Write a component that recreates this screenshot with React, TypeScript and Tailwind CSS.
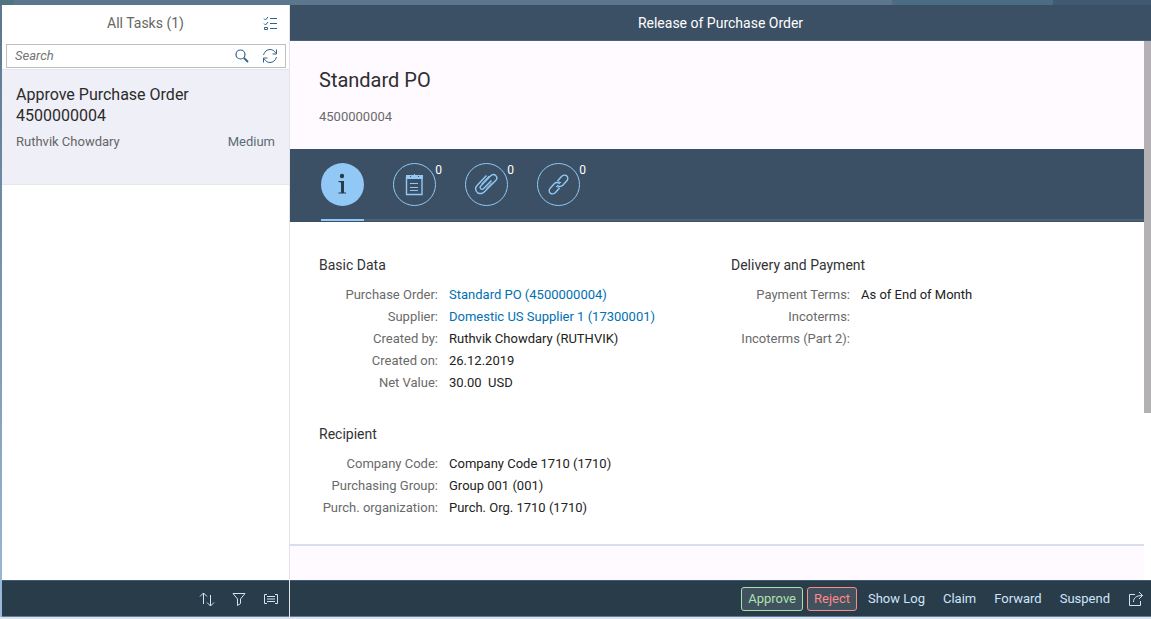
import type { ReactNode } from 'react';

type Row = { label: string; value?: string; link?: boolean };

const basicData: Row[] = [
  { label: 'Purchase Order:', value: 'Standard PO (4500000004)', link: true },
  { label: 'Supplier:', value: 'Domestic US Supplier 1 (17300001)', link: true },
  { label: 'Created by:', value: 'Ruthvik Chowdary (RUTHVIK)' },
  { label: 'Created on:', value: '26.12.2019' },
  { label: 'Net Value:', value: '30.00\u00a0 USD' },
];

const recipient: Row[] = [
  { label: 'Company Code:', value: 'Company Code 1710 (1710)' },
  { label: 'Purchasing Group:', value: 'Group 001 (001)' },
  { label: 'Purch. organization:', value: 'Purch. Org. 1710 (1710)' },
];

const delivery: Row[] = [
  { label: 'Payment Terms:', value: 'As of End of Month' },
  { label: 'Incoterms:' },
  { label: 'Incoterms (Part 2):' },
];

const actions = ['Show Log', 'Claim', 'Forward', 'Suspend'];

function Icon({ size = 16, children }: { size?: number; children: ReactNode }) {
  return (
    <svg
      width={size}
      height={size}
      viewBox={`0 0 ${size} ${size}`}
      fill="none"
      stroke="currentColor"
      strokeWidth="1"
      className="shrink-0"
      aria-hidden="true"
    >
      {children}
    </svg>
  );
}

const tabs = [
  {
    label: 'Notes',
    icon: (
      <Icon size={25}>
        <path d="M4.500 5v17.500h15.500V5" strokeWidth="1.400" />
        <path d="M4 3h17v4H4z" fill="currentColor" stroke="none" />
        <path d="M8.500 2v3M12.500 2v3M16.500 2v3" />
        <path d="M8.500 2v3M16.500 2v3" stroke="#3b5064" strokeDasharray="1 1" />
        <path d="M8 11.500h8M8 15.500h8M8 18.500h8" />
      </Icon>
    ),
  },
  {
    label: 'Attachments',
    icon: (
      <Icon size={25}>
        <path
          d="M12.500 3.500L3.500 13c-2 2-2.300 4.300-1.200 6.200 1 2 2.800 2.600 5 2.300 1.400-.2 2.400-.9 3.400-1.900l11-11c1.500-1.600 1.600-3.400.2-4.900-1.500-1.500-3.500-1.500-5.200.1L7 13.700c-1 1-1.100 2.100-.4 2.900.8.9 2 .9 3-.1l7.900-8"
          strokeWidth="1.400"
        />
        <path d="M15 4L7.500 12M12 16.500l6-6" />
      </Icon>
    ),
  },
  {
    label: 'Links',
    icon: (
      <Icon size={25}>
        <path
          d="M11.500 9l4-4.500c1.500-1.600 3.900-1.800 5.300-.6 1.400 1.300 1.300 3.600-.2 5.200l-3.800 4.200c-1.700 1.700-4.500 1.600-5.600-.3M13.500 16l-4 4.500c-1.500 1.600-3.900 1.800-5.300.6-1.400-1.300-1.300-3.600.2-5.200l3.800-4.200c1.700-1.700 4.500-1.600 5.600.3"
          strokeWidth="1.400"
        />
        <path d="M10 14l1 1h2.500M15 11l-1-1h-2.500" />
      </Icon>
    ),
  },
];

function FieldGroup({ title, rows }: { title: string; rows: Row[] }) {
  return (
    <section>
      <h3 className="mb-[9px] text-sm leading-5 text-[#333]">{title}</h3>
      <dl className="grid grid-cols-[119px_1fr] gap-x-[11px] text-[13px] leading-[22px]">
        {rows.map((row) => (
          <div key={row.label} className="contents">
            <dt className="text-right whitespace-nowrap text-[#6a6a6a]">{row.label}</dt>
            <dd className="text-[#222]">
              {row.link ? (
                <a href="#" className="text-[#0070b1] hover:underline">
                  {row.value}
                </a>
              ) : (
                row.value
              )}
            </dd>
          </div>
        ))}
      </dl>
    </section>
  );
}

function TaskList() {
  return (
    <aside className="flex w-72 shrink-0 flex-col border-r border-[#e4e4e8] bg-white">
      <header className="relative flex h-[35px] items-center justify-center">
        <h1 className="text-sm text-[#666]">All Tasks (1)</h1>
        <button aria-label="Select tasks" className="absolute right-2.5 text-[#346187]">
          <Icon>
            <path d="M1 3.500l1.500 1.500L5 2M1 8.500l1.500 1.500L5 7M1.500 12.500h3v2h-3z" />
            <path d="M7 3.500h7M7 8.500h7M7 13.500h7" />
          </Icon>
        </button>
      </header>
      <div className="pt-1 pr-[3px] pb-px pl-1">
        <div className="flex h-6 items-center border border-[#bfbfbf] pr-[7px] pl-2">
          <input
            type="search"
            aria-label="Search"
            placeholder="Search"
            className="min-w-0 flex-1 text-[13px] italic outline-none placeholder:text-[#757575]"
          />
          <button aria-label="Start search" className="mr-3 text-[#346187]">
            <Icon>
              <circle cx="6.500" cy="6.500" r="4.500" strokeWidth="1.200" />
              <path d="M10 10l4 4" strokeWidth="1.800" />
            </Icon>
          </button>
          <button aria-label="Refresh" className="text-[#346187]">
            <Icon>
              <path d="M1.500 7C2.500 3.500 5 1.500 8 1.500c2.500 0 4.500 1.300 5.700 3.500M14.500 9c-1 3.500-3.500 5.500-6.500 5.500-2.500 0-4.500-1.300-5.700-3.500" />
              <path d="M14.500 1.500V6H10.500M1.500 14.500V10h4" />
            </Icon>
          </button>
        </div>
      </div>
      <ul className="flex-1">
        <li className="h-[116px] border-y border-[#e6e6ea] bg-[#efeff7] px-3.5 pt-3.5">
          <p className="w-48 text-base leading-[21px] text-[#2b2b2b]">Approve Purchase Order 4500000004</p>
          <div className="mt-[5px] flex justify-between text-[13px] leading-[22px] text-[#666]">
            <span>Ruthvik Chowdary</span>
            <span className="text-[#5d6b75]">Medium</span>
          </div>
        </li>
      </ul>
      <footer className="flex h-[37px] items-center justify-end gap-4 border-y border-t-[#3f5b70] border-b-[#5c7da3] bg-[#293c49] pr-2.5 text-[#cfe4fb]">
        <button aria-label="Sort">
          <Icon>
            <path d="M4.500 13V2M1 5.500L4.500 2 8 5.500M11.500 4v11M8 11.500l3.500 3.500 3.500-3.500" />
          </Icon>
        </button>
        <button aria-label="Filter">
          <Icon>
            <path d="M2 2.500h12L9.500 8v4.500l-3 2V8z" />
          </Icon>
        </button>
        <button aria-label="Group">
          <Icon>
            <path d="M4 3.500H1.500v9H4M12 3.500h2.500v9H12M4 5.500h8M4 8h8M4 10.500h8" />
          </Icon>
        </button>
      </footer>
    </aside>
  );
}

function Detail() {
  return (
    <main className="flex min-w-0 flex-1 flex-col bg-[#fefaff]">
      <header className="flex h-9 shrink-0 items-center justify-center border-b border-[#45637b] bg-[#3b5064]">
        <h2 className="text-sm text-white">Release of Purchase Order</h2>
      </header>
      <div className="flex min-h-0 flex-1">
        <div className="min-w-0 flex-1 overflow-hidden">
          <div className="h-[108px] px-[29px] pt-6">
            <h2 className="text-xl leading-[30px] text-[#2f2f2f]">Standard PO</h2>
            <p className="mt-3 text-[13px] leading-5 text-[#6a6a6a]">4500000004</p>
          </div>
          <nav className="flex h-[73px] bg-[#3b5064] pl-[31px]">
            <div className="flex flex-1 gap-[29px] self-start border-b-2 border-[#4a6279] pt-3.5">
              <button
                aria-label="Information"
                className="-mb-0.5 flex h-[58px] w-[43px] items-start border-b-2 border-[#91c8f6]"
              >
                <span className="flex size-[43px] items-center justify-center rounded-full bg-[#91c8f6] text-[#293c49]">
                  <svg width="25" height="25" viewBox="0 0 25 25" fill="currentColor" aria-hidden="true">
                    <circle cx="12" cy="4" r="2.200" />
                    <path d="M8.500 9h5.500v11.500h2v1H8.500v-1H11V10.500l-2.500-.5z" />
                  </svg>
                </span>
              </button>
              {tabs.map((tab) => (
                <button
                  key={tab.label}
                  aria-label={tab.label}
                  className="relative flex h-14 w-[43px] items-start text-[#91c8f6]"
                >
                  <span className="flex size-[43px] items-center justify-center rounded-full border border-[#91c8f6]">
                    {tab.icon}
                  </span>
                  <span className="absolute -top-px -right-1.5 text-xs leading-4 text-white">0</span>
                </button>
              ))}
            </div>
          </nav>
          <div className="grid grid-cols-2 border-b-2 border-[#d6dfeb] bg-white pt-[33px] pr-3.5 pb-[25px] pl-4">
            <div className="space-y-[30px] pl-[13px]">
              <FieldGroup title="Basic Data" rows={basicData} />
              <FieldGroup title="Recipient" rows={recipient} />
            </div>
            <div className="pl-[13px]">
              <FieldGroup title="Delivery and Payment" rows={delivery} />
            </div>
          </div>
        </div>
        {/* scrollbar */}
        <div className="w-[7px] shrink-0 bg-white">
          <div className="h-[69%] bg-[#b3b1b4]" />
        </div>
      </div>
      <footer className="flex h-[37px] shrink-0 items-center justify-end gap-1 border-y border-t-[#3f5b70] border-b-[#5c7da3] bg-[#293c49] text-[13px] text-[#cfe4fb]">
        <button className="h-6 rounded-[3px] border border-[#abe2ab] bg-[#41525f] px-1.5 text-[#abe2ab]">
          Approve
        </button>
        <button className="h-6 rounded-[3px] border border-[#ff8888] bg-[#41525f] px-1.5 text-[#ff8888]">
          Reject
        </button>
        {actions.map((action) => (
          <button key={action} className="h-6 border border-transparent px-1.5">
            {action}
          </button>
        ))}
        <button aria-label="Share" className="flex h-6 items-center border border-transparent px-1.5">
          <Icon>
            <path d="M7 3.500H1.500v11h11V10M5.500 11c0-4 2.500-6.500 9-6.500M11 1l3.500 3.500L11 8" />
          </Icon>
        </button>
      </footer>
    </main>
  );
}

export default function App() {
  return (
    <div className="flex h-screen flex-col bg-[#dbe2ea] pb-0.5 font-['Roboto',sans-serif]">
      {/* strip of the launchpad background */}
      <div className="flex h-[5px] shrink-0 bg-[#5c768d]">
        <div className="w-3.5 bg-[#4f7580]" />
        <div className="ml-auto w-[14%] bg-[#4a6c85]" />
        <div className="w-[8.500%] bg-[#415a74]" />
      </div>
      <div className="flex min-h-0 flex-1 bg-gradient-to-b from-[#5c768d] to-[#9bbbd9] pl-0.5">
        <TaskList />
        <Detail />
      </div>
    </div>
  );
}
